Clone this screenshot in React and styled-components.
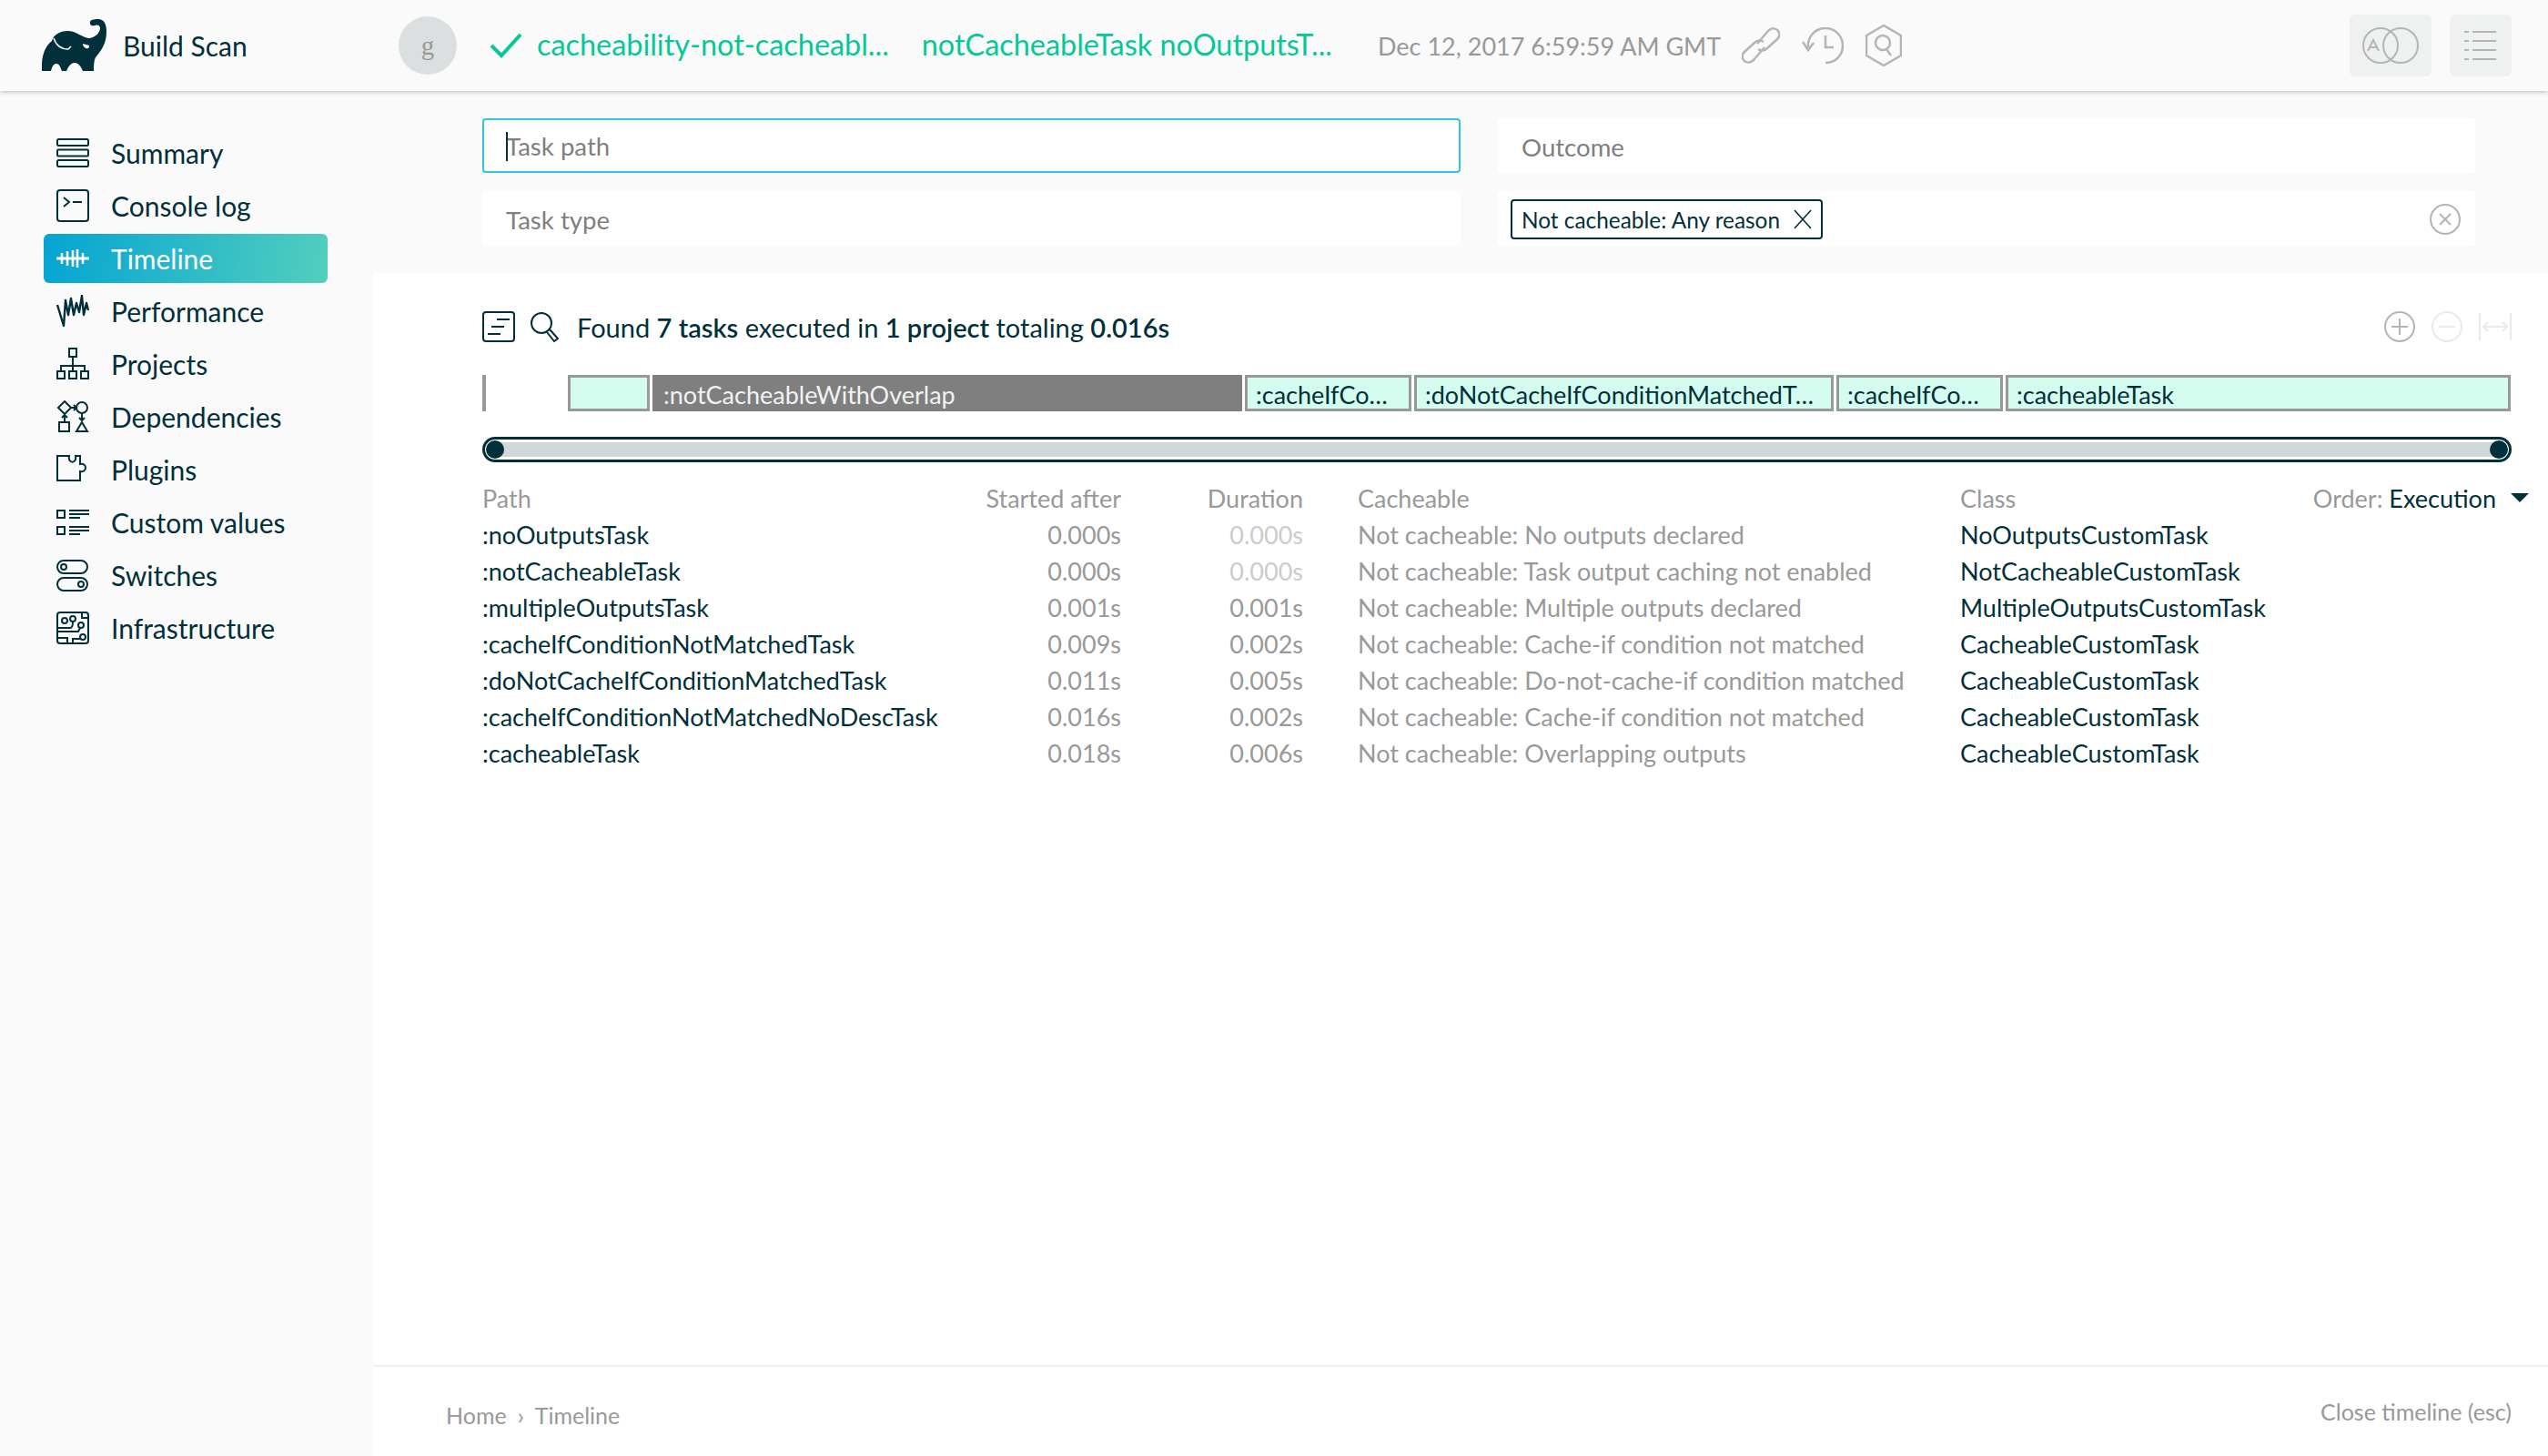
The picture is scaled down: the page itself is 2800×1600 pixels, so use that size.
import React from "react";
import styled, { createGlobalStyle } from "styled-components";

const DARK = "#02303a";
const GREEN = "#05c897";
const GREY = "#999";
const ICON_GREY = "#b5b5b5";

const GlobalStyle = createGlobalStyle`
  html, body { margin: 0; padding: 0; background: #fafafa; }
  * { box-sizing: border-box; }
  body {
    font-family: Lato, "Open Sans", sans-serif;
    font-size: 28px;
    color: ${DARK};
    text-rendering: optimizeLegibility;
  }
`;

const Page = styled.div`
  width: 2800px;
  height: 1600px;
  display: flex;
  flex-direction: column;
  overflow: hidden;
  background: #fafafa;
`;

/* header */
const Header = styled.header`
  height: 100px;
  flex: none;
  display: flex;
  align-items: center;
  padding: 0 40px 0 46px;
  background: #fafafa;
  box-shadow: 0 1px 5px rgba(0, 0, 0, 0.25);
  position: relative;
  z-index: 2;
`;

const Brand = styled.div`
  width: 392px;
  display: flex;
  align-items: center;
  gap: 17px;
  font-size: 30px;
`;

const Avatar = styled.div`
  width: 64px;
  height: 64px;
  border-radius: 50%;
  background: #dcdfe0;
  color: ${GREY};
  font-family: "Liberation Serif", serif;
  font-size: 29px;
  display: flex;
  align-items: center;
  justify-content: center;
  margin-right: 36px;
`;

const BuildName = styled.span`
  color: ${GREEN};
  font-size: 32.4px;
  margin-left: ${(p) => p.$left}px;
  white-space: nowrap;
  position: relative;
  top: -2px;
`;

const DateText = styled.span`
  color: ${GREY};
  font-size: 27px;
  margin: 0 23px 0 50px;
  white-space: nowrap;
`;

const HeaderIcons = styled.div`
  display: flex;
  align-items: center;
  gap: 24px;
`;

const HeaderRight = styled.div`
  margin-left: auto;
  display: flex;
  gap: 20px;
`;

const SquareButton = styled.div`
  width: ${(p) => p.$w}px;
  height: 68px;
  border-radius: 6px;
  background: #eff1f1;
  display: flex;
  align-items: center;
  justify-content: center;
`;

/* body */
const Body = styled.div`
  flex: 1;
  display: flex;
  min-height: 0;
`;

const Sidebar = styled.nav`
  width: 410px;
  flex: none;
  padding: 39px 0 0 48px;
  display: flex;
  flex-direction: column;
`;

const NavItem = styled.a`
  width: 312px;
  height: 58px;
  display: flex;
  align-items: center;
  gap: 24px;
  padding-left: 14px;
  font-size: 30px;
  border-radius: 6px;
  color: ${(p) => (p.$active ? "#fff" : DARK)};
  background: ${(p) =>
    p.$active ? "linear-gradient(100deg, #04a4d3 0%, #52cfbd 100%)" : "none"};
  ${(p) => p.$active && "height: 54px; margin: 2px 0;"}
`;

const Main = styled.main`
  flex: 1;
  display: flex;
  flex-direction: column;
  min-width: 0;
`;

const Filters = styled.section`
  height: 200px;
  flex: none;
  padding: 30px 80px 0 120px;
  display: grid;
  grid-template-columns: 1075px 1074px;
  grid-auto-rows: 60px;
  column-gap: 41px;
  row-gap: 20px;
`;

const Field = styled.div`
  background: #fff;
  border-radius: 4px;
  border: 2px solid ${(p) => (p.$focus ? "#35c2e3" : "#fff")};
  display: flex;
  align-items: center;
  padding: ${(p) => (p.$focus ? 0 : 2)}px 12px 0 24px;
  color: #7f7f7f;
  font-size: 27.6px;
  position: relative;
`;

const Caret = styled.span`
  position: absolute;
  left: 24px;
  top: 13px;
  width: 2px;
  height: 32px;
  background: ${DARK};
`;

const ChipField = styled(Field)`
  padding: 2px 14px 0 12px;
  justify-content: space-between;
`;

const Chip = styled.div`
  height: 44px;
  width: 343px;
  border: 2px solid ${DARK};
  border-radius: 4px;
  display: flex;
  align-items: center;
  justify-content: space-between;
  padding: 0 10px;
  color: ${DARK};
  font-size: 24.4px;
  white-space: nowrap;
`;

const Content = styled.section`
  flex: 1;
  background: #fff;
  padding: 35px 40px 0 120px;
`;

const ResultRow = styled.div`
  height: 48px;
  display: flex;
  align-items: center;
  font-size: 29px;
  b { font-weight: 600; }
`;

const ResultIcons = styled.div`
  display: flex;
  align-items: center;
  gap: 16px;
  margin-right: 20px;
`;

const ZoomIcons = styled.div`
  margin-left: auto;
  display: flex;
  align-items: center;
  gap: 18px;
`;

const Bar = styled.div`
  margin-top: 29px;
  height: 40px;
  display: flex;
  gap: 3px;
`;

const Tick = styled.div`
  width: 4px;
  background: ${GREY};
  margin-right: 87px;
`;

const Segment = styled.div`
  width: ${(p) => p.$w}px;
  flex: none;
  border: 3px solid ${(p) => (p.$dark ? "#7f7f7f" : GREY)};
  background: ${(p) => (p.$dark ? "#7f7f7f" : "#d4fdef")};
  color: ${(p) => (p.$dark ? "#f2f2f2" : DARK)};
  font-size: 27px;
  line-height: 38px;
  padding-left: 9px;
  white-space: nowrap;
  overflow: hidden;
`;

const Slider = styled.div`
  position: relative;
  margin-top: 28px;
  height: 28px;
  border: 3px solid ${DARK};
  border-radius: 14px;
  background: #d0d8da;
  box-shadow: inset 0 0 0 3px #fff;
`;

const Knob = styled.span`
  position: absolute;
  top: 1px;
  ${(p) => (p.$end ? "right: 1px;" : "left: 1px;")}
  width: 20px;
  height: 20px;
  border-radius: 50%;
  background: ${DARK};
`;

const HeadRow = styled.div`
  margin-top: 19px;
  margin-right: -19px;
  height: 40px;
  display: grid;
  grid-template-columns: 552px 150px 200px 722px 1fr;
  align-items: center;
  color: ${GREY};
  font-size: 27px;
  white-space: nowrap;
`;

const TaskRow = styled(HeadRow)`
  margin-top: 0;
  color: ${DARK};
`;

const Numeric = styled.span`
  text-align: right;
  color: ${(p) => (p.$faint ? "#ccc" : GREY)};
`;

const Reason = styled.span`
  padding-left: 60px;
  color: ${GREY};
`;

const ClassHead = styled.div`
  display: flex;
  justify-content: space-between;
  align-items: center;
`;

const Order = styled.span`
  display: flex;
  align-items: center;
  gap: 16px;
  em { font-style: normal; color: ${DARK}; }
`;

const Triangle = styled.i`
  width: 0;
  height: 0;
  border-left: 10px solid transparent;
  border-right: 10px solid transparent;
  border-top: 10px solid ${DARK};
`;

const Footer = styled.footer`
  height: 100px;
  flex: none;
  background: #fff;
  border-top: 2px solid #f0f0f0;
  padding: 0 40px 0 80px;
  display: flex;
  align-items: center;
  justify-content: space-between;
  color: ${GREY};
  font-size: 25px;
`;

const Crumbs = styled.div`
  display: flex;
  gap: 12px;
  position: relative;
  top: 4px;
`;

const Svg = ({ w = 36, h = 36, color = DARK, sw = 2, children }) => (
  <svg
    width={w}
    height={h}
    viewBox={`0 0 ${w} ${h}`}
    fill="none"
    stroke={color}
    strokeWidth={sw}
    style={{ flex: "none" }}
  >
    {children}
  </svg>
);

const Elephant = () => (
  <svg width="72" height="58" viewBox="0 0 72 58" style={{ flex: "none" }}>
    <path
      fill={DARK}
      d="M0 57C-1 42 3 30 11 24C13 17 20 13 28 13C38 13 44 20 51 21C58 21 64 15 64 10C64 6 60 6 58 7C55 8 52 6 53 3C54 0 59 0 62 0C68 0 71 5 71 14C71 28 64 36 59 42C57 46 57 52 57 57L45 57C43 52 40 48 36 48C32 48 29 52 27 57L22 57C20 52 19 49 16 49C13 49 11 52 10 57Z"
    />
    <path fill="none" stroke="#fafafa" strokeWidth="1.5" d="M13 21C15 27 19 33 29 33L32 30" />
    <path fill="#fafafa" d="M45 27C45 31 49 33 51 32C52 31 52 30 52 29Z" />
  </svg>
);

const navIcons = {
  Summary: (
    <Svg>
      <rect x="1" y="3" width="34" height="7" rx="1.5" />
      <rect x="1" y="14.5" width="34" height="7" rx="1.5" />
      <rect x="1" y="26" width="34" height="7" rx="1.5" />
    </Svg>
  ),
  "Console log": (
    <Svg>
      <rect x="1" y="1" width="34" height="34" rx="3" />
      <path d="M8 9L14 14L8 19M18 14H28" />
    </Svg>
  ),
  Timeline: (
    <Svg color="#fff" sw={2.5}>
      <path strokeWidth="3" d="M0 18H36" />
      <path d="M6 12V24M12 10V26M18 9V27M23 8V28M29 12V24" />
    </Svg>
  ),
  Performance: (
    <Svg sw={2.4}>
      <path d="M1 11L8 34L10 6L13 22L16 4L19 22L22 9L25 19L28 1L30 22L33 9L35 17" strokeLinejoin="round" />
    </Svg>
  ),
  Projects: (
    <Svg>
      <rect x="14" y="1" width="8" height="9" />
      <path d="M18 10V20M5 26V20H31V26M18 20V26" />
      <rect x="1" y="26" width="8" height="8" />
      <rect x="14" y="26" width="8" height="8" />
      <rect x="27" y="26" width="8" height="8" />
    </Svg>
  ),
  Dependencies: (
    <Svg>
      <path d="M9 1L16 8L9 15L2 8Z" />
      <circle cx="28" cy="8" r="6" />
      <path d="M16 8H22M19 5L22 8L19 11M9 15V23M6 19L9 16L12 19M28 14V22M25 19L28 22L31 19" />
      <rect x="3" y="24" width="11" height="10" />
      <path d="M28 24L34 34H22Z" />
    </Svg>
  ),
  Plugins: (
    <Svg>
      <path d="M1 3H14C12 12 23 12 21 3H26V12C34 10 34 22 26 20V30H1Z" />
    </Svg>
  ),
  "Custom values": (
    <Svg>
      <rect x="1" y="5" width="8" height="8" />
      <rect x="1" y="23" width="8" height="8" />
      <path d="M14 5H36M14 9H36M14 13H26M14 23H36M14 27H36M14 31H26" />
    </Svg>
  ),
  Switches: (
    <Svg>
      <rect x="1" y="2" width="33" height="14" rx="7" />
      <circle cx="8" cy="9" r="3" />
      <rect x="1" y="21" width="33" height="14" rx="7" />
      <circle cx="27" cy="28" r="3" />
    </Svg>
  ),
  Infrastructure: (
    <Svg>
      <rect x="1" y="1" width="34" height="34" rx="3" />
      <circle cx="9" cy="10" r="3" />
      <circle cx="18" cy="8" r="3" />
      <circle cx="27" cy="15" r="3" />
      <circle cx="29" cy="28" r="3" />
      <path d="M1 18H15C18 18 18 14 18 11M1 22H24L26 18M1 29H12V35M18 35V30H26M28 1V7H35" />
    </Svg>
  ),
};

const navItems = Object.keys(navIcons);

const segments = [
  { w: 90 },
  { w: 648, label: ":notCacheableWithOverlap", dark: true },
  { w: 183, label: ":cacheIfCo…" },
  { w: 461, label: ":doNotCacheIfConditionMatchedT…" },
  { w: 183, label: ":cacheIfCo…" },
  { w: 555, label: ":cacheableTask" },
];

const tasks = [
  [":noOutputsTask", "0.000s", "0.000s", "No outputs declared", "NoOutputsCustomTask", true],
  [":notCacheableTask", "0.000s", "0.000s", "Task output caching not enabled", "NotCacheableCustomTask", true],
  [":multipleOutputsTask", "0.001s", "0.001s", "Multiple outputs declared", "MultipleOutputsCustomTask"],
  [":cacheIfConditionNotMatchedTask", "0.009s", "0.002s", "Cache-if condition not matched", "CacheableCustomTask"],
  [":doNotCacheIfConditionMatchedTask", "0.011s", "0.005s", "Do-not-cache-if condition matched", "CacheableCustomTask"],
  [":cacheIfConditionNotMatchedNoDescTask", "0.016s", "0.002s", "Cache-if condition not matched", "CacheableCustomTask"],
  [":cacheableTask", "0.018s", "0.006s", "Overlapping outputs", "CacheableCustomTask"],
];

const App = () => {
  return (
    <Page>
      <GlobalStyle />
      <Header>
        <Brand>
          <Elephant />
          Build Scan
        </Brand>
        <Avatar>g</Avatar>
        <Svg w={36} h={30} color={GREEN} sw={4}>
          <path d="M2 15L13 26L34 3" />
        </Svg>
        <BuildName $left={16}>cacheability-not-cacheabl...</BuildName>
        <BuildName $left={36}>notCacheableTask noOutputsT...</BuildName>
        <DateText>Dec 12, 2017 6:59:59 AM GMT</DateText>
        <HeaderIcons>
          <Svg w={42} h={40} color={ICON_GREY} sw={2.5}>
            <path d="M17 18L29 4C33 0 38 1 40 4C42 7 42 10 39 13L28 23C25 26 21 26 18 24" />
            <path d="M25 22L13 36C9 40 4 39 2 36C0 33 0 30 3 27L14 17C17 14 21 14 24 16" />
          </Svg>
          <Svg w={46} h={40} color={ICON_GREY} sw={2.5}>
            <path d="M7 22C6 10 15 1 26 1C37 1 45 10 45 20C45 31 37 39 26 39" />
            <path d="M1 16L7 25L13 17M26 9V22H35" />
          </Svg>
          <Svg w={40} h={46} color={ICON_GREY} sw={2.5}>
            <path d="M20 1L39 12V34L20 45L1 34V12Z" />
            <circle cx="19" cy="20" r="8" />
            <path d="M23 27L28 34" />
          </Svg>
        </HeaderIcons>
        <HeaderRight>
          <SquareButton $w={90}>
            <Svg w={62} h={42} color={ICON_GREY}>
              <circle cx="20" cy="21" r="19" />
              <circle cx="42" cy="21" r="19" />
              <path d="M6 27L12 15L18 27M8 23H16" />
            </Svg>
          </SquareButton>
          <SquareButton $w={68}>
            <Svg w={36} h={40} color={ICON_GREY}>
              <path d="M0 5H5M9 5H35M0 15H5M9 15H35M0 25H5M9 25H35M0 35H5M9 35H35" />
            </Svg>
          </SquareButton>
        </HeaderRight>
      </Header>
      <Body>
        <Sidebar>
          {navItems.map((item) => (
            <NavItem key={item} $active={item === "Timeline"}>
              {navIcons[item]}
              {item}
            </NavItem>
          ))}
        </Sidebar>
        <Main>
          <Filters>
            <Field $focus>
              <Caret />
              Task path
            </Field>
            <Field>Outcome</Field>
            <Field>Task type</Field>
            <ChipField>
              <Chip>
                Not cacheable: Any reason
                <Svg w={20} h={22} sw={1.6}>
                  <path d="M1 1L19 21M19 1L1 21" />
                </Svg>
              </Chip>
              <Svg w={34} h={34} color={ICON_GREY}>
                <circle cx="17" cy="17" r="16" />
                <path d="M11 11L23 23M23 11L11 23" />
              </Svg>
            </ChipField>
          </Filters>
          <Content>
            <ResultRow>
              <ResultIcons>
                <Svg w={36} h={34}>
                  <rect x="1" y="1" width="34" height="32" rx="3" />
                  <path d="M16 9H30M10 17H24M6 25H20" />
                </Svg>
                <Svg w={32} h={34}>
                  <circle cx="13" cy="13" r="11" />
                  <path d="M19 23L27 33L31 30L22 20" />
                </Svg>
              </ResultIcons>
              <span>
                Found <b>7 tasks</b> executed in <b>1 project</b> totaling <b>0.016s</b>
              </span>
              <ZoomIcons>
                <Svg w={34} h={34} color={ICON_GREY}>
                  <circle cx="17" cy="17" r="16" />
                  <path d="M17 8V26M8 17H26" />
                </Svg>
                <Svg w={34} h={34} color="#eaeaea">
                  <circle cx="17" cy="17" r="16" />
                  <path d="M8 17H26" />
                </Svg>
                <Svg w={36} h={32} color="#eaeaea">
                  <path d="M1 1V31M35 1V31M5 16H31M10 11L5 16L10 21M26 11L31 16L26 21" />
                </Svg>
              </ZoomIcons>
            </ResultRow>
            <Bar>
              <Tick />
              {segments.map((seg, i) => (
                <Segment key={i} $w={seg.w} $dark={seg.dark}>
                  {seg.label}
                </Segment>
              ))}
            </Bar>
            <Slider>
              <Knob />
              <Knob $end />
            </Slider>
            <HeadRow>
              <span>Path</span>
              <Numeric>Started after</Numeric>
              <Numeric>Duration</Numeric>
              <Reason>Cacheable</Reason>
              <ClassHead>
                <span>Class</span>
                <Order>
                  <span>
                    Order: <em>Execution</em>
                  </span>
                  <Triangle />
                </Order>
              </ClassHead>
            </HeadRow>
            {tasks.map(([path, started, duration, reason, cls, faint]) => (
              <TaskRow key={path}>
                <span>{path}</span>
                <Numeric>{started}</Numeric>
                <Numeric $faint={faint}>{duration}</Numeric>
                <Reason>Not cacheable: {reason}</Reason>
                <span>{cls}</span>
              </TaskRow>
            ))}
          </Content>
          <Footer>
            <Crumbs>
              <span>Home</span>
              <span>›</span>
              <span>Timeline</span>
            </Crumbs>
            <span>Close timeline (esc)</span>
          </Footer>
        </Main>
      </Body>
    </Page>
  );
};

export default App;
